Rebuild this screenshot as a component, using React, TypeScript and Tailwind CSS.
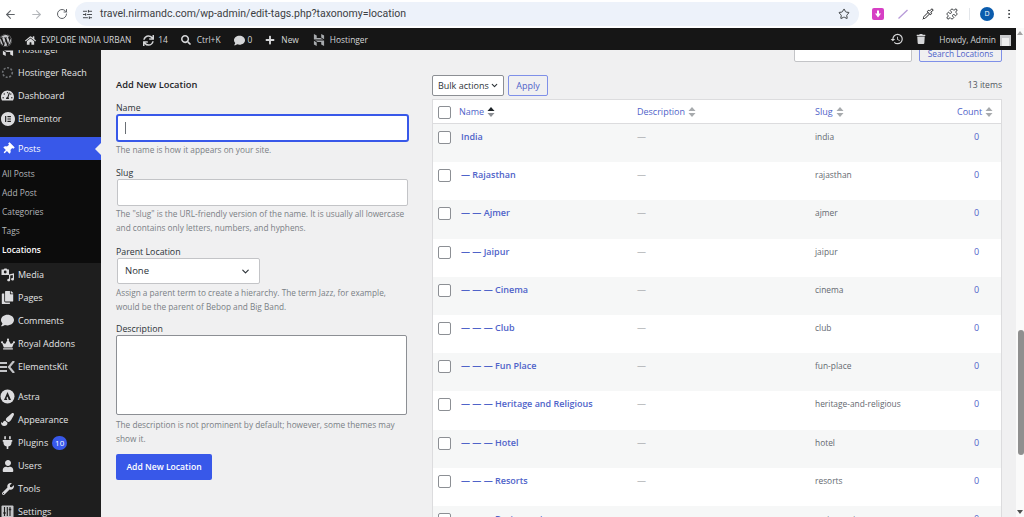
import React from "react";
import { ArrowLeft, ArrowRight, RotateCw, SlidersHorizontal, Star, Pipette, Puzzle, EllipsisVertical, ChevronDown } from "lucide-react";
import {
  FaWordpress, FaHome, FaSearch, FaComment, FaPlus, FaTrash, FaTachometerAlt, FaThumbtack,
  FaCopy, FaCrown, FaPaintBrush, FaPlug, FaUser, FaWrench, FaSync,
} from "react-icons/fa";
import { MdHistory } from "react-icons/md";
import { SiHostinger, SiElementor } from "react-icons/si";

const font = "font-['Open_Sans','Noto_Sans',sans-serif]";

const SortArrows = ({ active }: { active?: boolean }) => (
  <svg width="8" height="12" viewBox="0 0 8 12" className="ml-[3px]">
    <path d="M4 1 L7.5 5 L0.5 5 Z" fill={active ? "#1d2327" : "#a7aaad"} />
    <path d="M4 11 L7.5 7 L0.5 7 Z" fill={active ? "#8c8f94" : "#a7aaad"} />
  </svg>
);

const Checkbox = () => (
  <div className="w-[13px] h-[13px] rounded-[2px] border border-[#8c8f94] bg-white" />
);

const ElementsKitIcon = () => (
  <svg width="15" height="12" viewBox="0 0 15 12">
    <path d="M0 1h7v2H0zM0 5h7v2H0zM0 9h7v2H0z" fill="#c3c4c7" />
    <path d="M14 0 L9 6 L14 12" fill="none" stroke="#c3c4c7" strokeWidth="2.2" />
  </svg>
);

const AstraIcon = () => (
  <svg width="15" height="15" viewBox="0 0 15 15">
    <circle cx="7.5" cy="7.5" r="7" fill="#dcdcde" />
    <path d="M7.5 3 L11 11 L8.8 11 L7.5 7.6 L6.4 9 L7.4 11 L4 11 Z" fill="#1e1e1e" />
  </svg>
);

const ReachIcon = () => (
  <svg width="13" height="13" viewBox="0 0 13 13">
    <circle cx="6.5" cy="6.5" r="4.8" fill="none" stroke="#6f7276" strokeWidth="1.6" strokeDasharray="2 1.6" />
  </svg>
);

const SettingsIcon = () => (
  <svg width="13" height="13" viewBox="0 0 13 13">
    <rect x="0.5" y="0.5" width="12" height="12" rx="1" fill="#c3c4c7" />
    <path d="M3.5 2v9M9 2v9M6.3 2v9" stroke="#1e1e1e" strokeWidth="1.1" />
    <path d="M2.3 8h2.4M7.8 4.5h2.4" stroke="#1e1e1e" strokeWidth="1.6" />
  </svg>
);

// dashicons-admin-media: a small camera with a music note beside it
const MediaIcon = () => (
  <svg width="14" height="14" viewBox="0 0 14 14" fill="#dcdcde">
    <path d="M0.5 1.5h2l1-1h2l1 1h1.5v5.5h-7.500z" />
    <circle cx="4.2" cy="4" r="1.4" fill="#1e1e1e" />
    <path d="M8 6.500l5-1.200v6a1.500 1.300 0 1 1-1.200-1.300v-3l-2.600 0.600v4.500a1.500 1.300 0 1 1-1.200-1.300z" />
  </svg>
);

const menuTop = [
  { label: "Hostinger Reach", icon: <ReachIcon /> },
  { label: "Dashboard", icon: <FaTachometerAlt size={13} /> },
  { label: "Elementor", icon: <SiElementor size={14} /> },
];

const menuBottom = [
  { label: "Media", icon: <MediaIcon /> },
  { label: "Pages", icon: <FaCopy size={13} /> },
  { label: "Comments", icon: <FaComment size={13} /> },
  { label: "Royal Addons", icon: <FaCrown size={14} /> },
  { label: "ElementsKit", icon: <ElementsKitIcon /> },
];

const menuLast = [
  { label: "Appearance", icon: <FaPaintBrush size={13} /> },
  { label: "Plugins", icon: <FaPlug size={13} />, badge: "10" },
  { label: "Users", icon: <FaUser size={12} /> },
  { label: "Tools", icon: <FaWrench size={12} /> },
  { label: "Settings", icon: <SettingsIcon /> },
];

const MenuItem = ({ label, icon, badge }: { label: string; icon: React.ReactNode; badge?: string }) => (
  <div className="h-[23px] flex items-center text-[9px] text-[#e4e4e6] shrink-0">
    <div className="w-[18px] pr-[3px] flex justify-center text-[#dcdcde] shrink-0">{icon}</div>
    <span className="whitespace-nowrap">{label}</span>
    {badge && (
      <span className="ml-[4px] w-[15px] h-[14px] rounded-full bg-[#3858e9] text-white text-[8px] flex items-center justify-center">
        {badge}
      </span>
    )}
  </div>
);

const rows = [
  { name: "India", slug: "india" },
  { name: "— Rajasthan", slug: "rajasthan" },
  { name: "— — Ajmer", slug: "ajmer" },
  { name: "— — Jaipur", slug: "jaipur" },
  { name: "— — — Cinema", slug: "cinema" },
  { name: "— — — Club", slug: "club" },
  { name: "— — — Fun Place", slug: "fun-place" },
  { name: "— — — Heritage and Religious", slug: "heritage-and-religious" },
  { name: "— — — Hotel", slug: "hotel" },
  { name: "— — — Resorts", slug: "resorts" },
  { name: "— — — Restaurants", slug: "restaurants" },
];

const Label = ({ children, className = "" }: { children: React.ReactNode; className?: string }) => (
  <div className={`h-[14px] text-[8.8px] leading-[16px] text-[#2c3338] ${className}`}>{children}</div>
);

const Help = ({ children, className = "" }: { children: React.ReactNode; className?: string }) => (
  <p className={`text-[8.25px] leading-[14px] text-[#7a7f85] ${className}`}>{children}</p>
);

const headCell = "flex items-center text-[9px] text-[#4f63c9]";

export default function App() {
  return (
    <div className={`w-[1024px] h-[517px] overflow-hidden flex flex-col bg-white ${font}`}>
      {/* browser chrome */}
      <div className="h-[28px] shrink-0 flex items-center bg-white">
        <div className="w-[75px] pl-[4px] flex items-center gap-[13px] text-[#5f6368] shrink-0">
          <ArrowLeft size={13} />
          <ArrowRight size={13} className="text-[#b4b7bb]" />
          <RotateCw size={12} />
        </div>
        <div className="w-[784px] h-[24px] rounded-full bg-[#edf2fa] flex items-center pl-[7px] pr-[9px] shrink-0">
          <SlidersHorizontal size={11} className="text-[#3c4043]" />
          <span className="ml-[7px] text-[10.5px] text-[#3c4043] font-['Roboto',sans-serif]">
            travel.nirmandc.com/wp-admin/edit-tags.php?taxonomy=location
          </span>
          <Star size={12} className="ml-auto text-[#3c4043]" />
        </div>
        <div className="flex-1 flex items-center pl-[13px]">
          <div className="w-[12px] h-[12px] rounded-[2px] bg-[#d63fc4] flex items-center justify-center">
            <svg width="8" height="8" viewBox="0 0 8 8">
              <path d="M3 0.500h2v3h2L4 7.500 1 3.500h2z" fill="white" />
            </svg>
          </div>
          <svg width="12" height="12" viewBox="0 0 12 12" className="ml-[13px]">
            <path d="M1.500 10.500 L10.500 2" stroke="#b79ad8" strokeWidth="1.3" />
          </svg>
          <Pipette size={12} className="ml-[13px] text-[#202124]" />
          <Puzzle size={12} className="ml-[12px] text-[#3c4043]" />
          <div className="w-px h-[12px] bg-[#e3e6ea] ml-[11px]" />
          <div className="ml-[10px] w-[14px] h-[14px] rounded-full bg-[#0b5cad] text-white text-[7px] flex items-center justify-center">D</div>
          <EllipsisVertical size={12} className="ml-[9px] text-[#3c4043]" />
        </div>
      </div>

      <div className="flex-1 flex min-h-0">
        <div className="w-[1016px] flex flex-col min-h-0">
          {/* admin bar */}
          <div className="h-[22px] pt-[2px] shrink-0 bg-[#161616] flex items-center text-[8.4px] text-[#d5d6d8] relative z-10 whitespace-nowrap">
            <FaWordpress size={13} className="-ml-[1px] text-[#c3c4c7]" />
            <FaHome size={11} className="ml-[13px]" />
            <span className="ml-[5px]">EXPLORE INDIA URBAN</span>
            <FaSync size={11} className="ml-[12px]" />
            <span className="ml-[4px]">14</span>
            <FaSearch size={10} className="ml-[13px]" />
            <span className="ml-[6px]">Ctrl+K</span>
            <FaComment size={11} className="ml-[13px]" />
            <span className="ml-[3px]">0</span>
            <FaPlus size={10} className="ml-[13px]" />
            <span className="ml-[6px]">New</span>
            <SiHostinger size={12} className="ml-[14px] text-[#a7aaad]" />
            <span className="ml-[5px]">Hostinger</span>
            <MdHistory size={14} className="ml-auto -mt-[2px]" />
            <FaTrash size={10} className="ml-[12px] -mt-[2px]" />
            <span className="ml-[13px]">Howdy, Admin</span>
            <div className="ml-[4px] mr-[5px] w-[11px] h-[11px] bg-[#c9cacc] flex items-end justify-center">
              <div className="w-[7px] h-[8px] bg-[#eeeeee]" />
            </div>
          </div>

          <div className="flex-1 flex min-h-0">
            {/* sidebar */}
            <div className="w-[101px] shrink-0 bg-[#1e1e1e] overflow-hidden flex flex-col">
              <div className="-mt-[12px] shrink-0">
                <MenuItem label="Hostinger" icon={<SiHostinger size={12} />} />
              </div>
              {menuTop.map((m) => (
                <MenuItem key={m.label} label={m.label} icon={m.icon} />
              ))}
              <div className="h-[7px] shrink-0" />
              <div className="h-[23px] bg-[#3858e9] flex items-center text-[9px] text-white relative shrink-0">
                <div className="w-[18px] pr-[3px] flex justify-center shrink-0">
                  <FaThumbtack size={12} className="rotate-45" />
                </div>
                Posts
                <div className="absolute right-0 top-[6px] w-0 h-0 border-y-[6px] border-y-transparent border-r-[6px] border-r-[#f0f0f1]" />
              </div>
              <div className="h-[103px] shrink-0 bg-[#0c0c0c] pt-[4px] pl-[2px] text-[8.4px] text-[#b4b6b9] flex flex-col">
                <div className="h-[19px] mt-[1px] flex items-center">All Posts</div>
                <div className="h-[19px] flex items-center">Add Post</div>
                <div className="h-[19px] flex items-center">Categories</div>
                <div className="h-[19px] flex items-center">Tags</div>
                <div className="h-[19px] flex items-center font-semibold text-white">Locations</div>
              </div>
              {menuBottom.map((m) => (
                <MenuItem key={m.label} label={m.label} icon={m.icon} />
              ))}
              <div className="h-[7px] shrink-0" />
              <MenuItem label="Astra" icon={<AstraIcon />} />
              {menuLast.map((m) => (
                <MenuItem key={m.label} label={m.label} icon={m.icon} badge={m.badge} />
              ))}
            </div>

            {/* content */}
            <div className="flex-1 bg-[#f0f0f1] overflow-hidden flex pl-[15px] pr-[14px] min-w-0">
              <div className="w-[293px] shrink-0 pt-[27px]">
                <h2 className="h-[14px] text-[9.3px] leading-[15px] font-semibold text-[#1d2327]">Add New Location</h2>
                <Label className="mt-[9px]">Name</Label>
                <div className="h-[28px] rounded-[3px] border-2 border-[#3858e9] bg-white flex items-center pl-[7px]">
                  <div className="w-px h-[12px] bg-[#6a6f75]" />
                </div>
                <Help className="mt-px">The name is how it appears on your site.</Help>
                <Label className="mt-[8px]">Slug</Label>
                <div className="h-[27px] w-[291px] ml-px border border-[#c3c4c7] bg-white rounded-[2px]" />
                <Help className="mt-px w-[292px]">
                  The "slug" is the URL-friendly version of the name. It is usually all lowercase and contains only letters, numbers, and hyphens.
                </Help>
                <Label className="mt-[9px]">Parent Location</Label>
                <div className="h-[26px] w-[143px] ml-px pt-px border border-[#c3c4c7] bg-white rounded-[2px] flex items-center justify-between pl-[7px] pr-[8px] text-[9.5px] text-[#2c3338]">
                  None
                  <ChevronDown size={11} strokeWidth={2.5} />
                </div>
                <Help className="mt-[2px] w-[290px]">
                  Assign a parent term to create a hierarchy. The term Jazz, for example, would be the parent of Bebop and Big Band.
                </Help>
                <Label className="mt-[7px]">Description</Label>
                <div className="h-[80px] w-[291px] border border-[#8c8f94] bg-white rounded-[2px]" />
                <Help className="mt-[3px] w-[285px]">
                  The description is not prominent by default; however, some themes may show it.
                </Help>
                <button className="mt-[8px] w-[96px] h-[26px] rounded-[2px] bg-[#3858e9] text-white text-[8.6px] font-semibold">
                  Add New Location
                </button>
              </div>

              <div className="w-[570px] ml-[23px] shrink-0">
                <div className="h-[12px] flex justify-end gap-[7px]">
                  <div className="w-[118px] h-[24px] -mt-[12px] border border-[#c3c4c7] bg-white rounded-[2px]" />
                  <div className="w-[83px] h-[24px] -mt-[12px] pt-[9px] border border-[#7f90e8] rounded-[2px] text-[8.3px] leading-[12px] text-[#4f63c9] text-center whitespace-nowrap">
                    Search Locations
                  </div>
                </div>
                <div className="mt-[13px] h-[21px] flex items-center">
                  <div className="w-[72px] h-[21px] border border-[#8c8f94] bg-white rounded-[2px] flex items-center pl-[5px] text-[9px] text-[#2c3338] whitespace-nowrap">
                    Bulk actions
                    <ChevronDown size={9} strokeWidth={3} className="ml-[1px]" />
                  </div>
                  <div className="ml-[4px] w-[40px] h-[21px] border border-[#7f90e8] bg-[#f0f0f1] rounded-[2px] flex items-center justify-center text-[9px] font-medium text-[#4f63c9]">
                    Apply
                  </div>
                  <span className="ml-auto text-[8.6px] text-[#50575e]">13 items</span>
                </div>
                <div className="mt-[3px] border border-[#dcdcde] bg-white">
                  <div className="h-[24px] pt-px grid grid-cols-[26px_178px_178px_142px_1fr] items-center border-b border-[#dcdcde]">
                    <div className="pl-[5px] flex"><Checkbox /></div>
                    <div className={headCell}>Name<SortArrows active /></div>
                    <div className={headCell}>Description<SortArrows /></div>
                    <div className={headCell}>Slug<SortArrows /></div>
                    <div className={headCell}>Count<SortArrows /></div>
                  </div>
                  {rows.map((r, i) => (
                    <div
                      key={r.slug}
                      className={`h-[38.2px] pt-[6px] grid grid-cols-[26px_178px_178px_142px_1fr] items-start ${i % 2 === 0 ? "bg-[#f6f7f7]" : "bg-white"}`}
                    >
                      <div className="pl-[5px] pt-px flex"><Checkbox /></div>
                      <div className="pl-[2px] text-[9px] leading-[13px] font-semibold text-[#4f63c9] whitespace-nowrap">{r.name}</div>
                      <div className="text-[9px] leading-[13px] text-[#8c8f94]">—</div>
                      <div className="text-[8.4px] leading-[13px] text-[#646970]">{r.slug}</div>
                      <div className="pl-[17px] text-[9px] leading-[13px] text-[#4f63c9]">0</div>
                    </div>
                  ))}
                </div>
              </div>
            </div>
          </div>
        </div>

        {/* scrollbar */}
        <div className="w-[8px] shrink-0 bg-[#fafafa] flex flex-col items-center pt-[3px] pb-[3px]">
          <div className="w-0 h-0 border-x-[3px] border-x-transparent border-b-[4px] border-b-[#a3a3a3]" />
          <div className="self-end w-[6px] h-[125px] bg-[#8f8f8f] mt-[295px] rounded-[3px]" />
          <div className="mt-auto w-0 h-0 border-x-[3px] border-x-transparent border-t-[4px] border-t-[#505050]" />
        </div>
      </div>
    </div>
  );
}
